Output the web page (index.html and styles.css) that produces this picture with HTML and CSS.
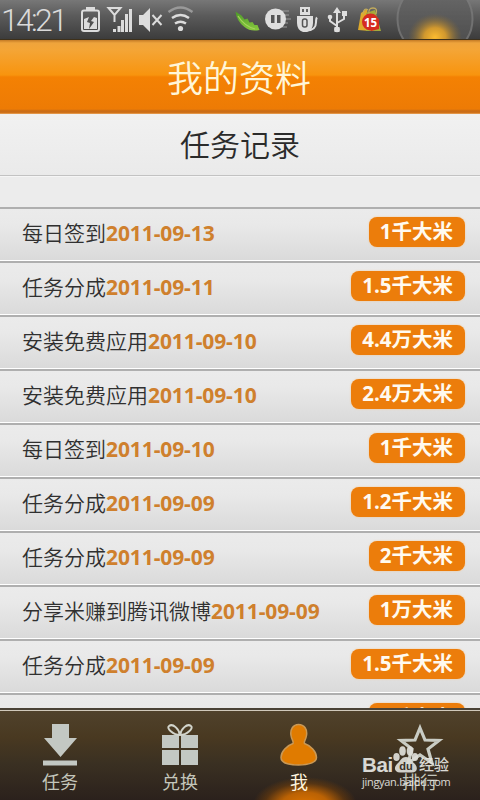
FILE: index.html
```html
<!DOCTYPE html>
<html lang="zh-CN">
<head>
<meta charset="utf-8">
<title>我的资料</title>
<link rel="stylesheet" href="styles.css">
</head>
<body>
<div class="phone">
  <div class="status">
    <span class="clock">14:21</span>
    <svg class="status-icons" width="400" height="39" viewBox="80 0 400 39">
      <defs>
        <radialGradient id="glow" cx="435" cy="37" r="27" gradientUnits="userSpaceOnUse" gradientTransform="translate(0 5) scale(1 .87)">
          <stop offset="0" stop-color="#fbbb30"/><stop offset=".4" stop-color="#dfa02a" stop-opacity=".9"/><stop offset="1" stop-color="#8a6c30" stop-opacity="0"/>
        </radialGradient>
        <linearGradient id="pea" x1="0" y1="0" x2="0" y2="1"><stop offset="0" stop-color="#4c9a28"/><stop offset="1" stop-color="#8ac93f"/></linearGradient>
        <linearGradient id="orb" x1="0" y1="0" x2="0" y2="1"><stop offset="0" stop-color="#666"/><stop offset="1" stop-color="#505050"/></linearGradient>
      </defs>
      <g fill="#dcdcdc">
        <path d="M86 7h9v3h-9z"/>
        <rect x="82" y="10.500" width="17" height="20.500" rx="2" fill="none" stroke="#dcdcdc" stroke-width="2"/>
        <path d="M84 19l5-2-2 5 3 1-1 6 5-7-3-1 3-4 3 1v11H84z"/>
        <path d="M108.500 8h12l-6 7zM114.500 14v8" fill="none" stroke="#dcdcdc" stroke-width="2"/>
        <path d="M113 29h3v3h-3zM117.500 26h3v6h-3zM121 20h3v12h-3zM125 14h3v18h-3zM129 9h3v23h-3z"/>
        <path d="M139 15h4l7-7v24l-7-7h-4z"/>
        <path d="M152.500 15l9 10M161.500 15l-9 10" stroke="#dcdcdc" stroke-width="2"/>
        <circle cx="180.500" cy="28.500" r="2.600"/>
        <path d="M175 23.500q5.500-3.500 11 0M172 18q8.500-6 17 0" fill="none" stroke="#dcdcdc" stroke-width="2.500"/>
        <path d="M168.500 12q12-9 24 0" fill="none" stroke="#999" stroke-width="2.300"/>
      </g>
      <path d="M235.500 11.500l6 4 3 4 3-1 2 4 3-.5 2 3 3 0 2 5q-9 2-15-3-8-6-9-15.500z" fill="url(#pea)"/>
      <path d="M238 16q6 10 17 13" fill="none" stroke="#a5d45c" stroke-width="1.200"/>
      <path d="M281 11h8M283 15h6M284 19h7M283 23h5M281 27h6" stroke="#999" stroke-width="1.200"/>
      <circle cx="275.500" cy="19" r="10.500" fill="#dedede"/>
      <path d="M271 15h3.500v8H271zM277 15h3.500v8H277z" fill="#555"/>
      <g fill="#dedede">
        <path fill-rule="evenodd" d="M300 7h10v8h-10zM302 9v3h2V9zM306 9v3h2V9z"/>
        <path d="M297 16h16v7q0 7-6 9h-4q-6-2-6-9z"/>
        <rect x="302.500" y="19" width="4.500" height="8" rx="2" fill="none" stroke="#555" stroke-width="1.500"/>
        <path d="M306 30.500q10 0 10-8 0-4 1-5" fill="none" stroke="#dedede" stroke-width="2"/>
        <path d="M337 7l4 6h-8zM334.500 27h5v5h-5z"/>
        <path d="M337 12v17M337 26l-7-5v-5M337 23l7-4v-6" fill="none" stroke="#dedede" stroke-width="2"/>
        <circle cx="330" cy="17" r="2.300"/><circle cx="337" cy="29.500" r="2.800"/><path d="M342 11h5v5h-5z"/>
      </g>
      <path d="M361 13l6-4 3 22-12-1z" fill="#dfaa2c"/>
      <path d="M366 13l9-3 6 21h-15z" fill="#a5a93b"/>
      <path d="M363 14q1-7 5-4M369 14q-1-6 4-6t3 6" fill="none" stroke="#c3ac5d" stroke-width="1.300"/>
      <circle cx="370.500" cy="22" r="8.500" fill="#d52c20"/>
      <path d="M371 15l8 4v10l-8 2z" fill="#d52c20"/>
      <text x="370.500" y="26.500" class="count">15</text>
      <circle cx="435" cy="19" r="37.500" fill="url(#orb)" stroke="#7a7a7a" stroke-width="2" opacity=".8"/>
      <ellipse cx="435" cy="37" rx="27" ry="24" fill="url(#glow)"/>
    </svg>
  </div>
  <header class="title">我的资料</header>
  <h2 class="subtitle">任务记录</h2>
  <div class="spacer"></div>
  <main class="list">
    <div class="row"><span>每日签到<b>2011-09-13</b></span><em>1千大米</em></div>
    <div class="row"><span>任务分成<b>2011-09-11</b></span><em>1.5千大米</em></div>
    <div class="row"><span>安装免费应用<b>2011-09-10</b></span><em>4.4万大米</em></div>
    <div class="row"><span>安装免费应用<b>2011-09-10</b></span><em>2.4万大米</em></div>
    <div class="row"><span>每日签到<b>2011-09-10</b></span><em>1千大米</em></div>
    <div class="row"><span>任务分成<b>2011-09-09</b></span><em>1.2千大米</em></div>
    <div class="row"><span>任务分成<b>2011-09-09</b></span><em>2千大米</em></div>
    <div class="row"><span>分享米赚到腾讯微博<b>2011-09-09</b></span><em>1万大米</em></div>
    <div class="row"><span>任务分成<b>2011-09-09</b></span><em>1.5千大米</em></div>
    <div class="row"><span></span><em>1千大米</em></div>
  </main>
  <nav class="tabs">
    <div class="tab">
      <svg width="48" height="48" viewBox="0 0 48 48"><path d="M16 3h17v14h8L24.500 36 8 17h8zM7 39.500h34v5H7z" fill="#c3c8c3"/></svg>
      <span>任务</span>
    </div>
    <div class="tab">
      <svg width="48" height="48" viewBox="0 0 48 48"><path d="M6 14h17v13H6zM25 14h17v13H25zM6 29h17v15H6zM25 29h17v15H25z" fill="#c3c8c3"/><path d="M24 14C17 14 10 7 13 5c4-3 10 3 11 9 1-6 7-12 11-9 3 2-4 9-11 9z" fill="none" stroke="#d2d4cb" stroke-width="2"/></svg>
      <span>兑换</span>
    </div>
    <div class="tab active">
      <svg width="48" height="48" viewBox="0 0 48 48"><path d="M23.500 3.500c6 0 9 5 8 11-.5 4-3 6-2 8 6 2 12 8 12 14 0 5-8 7.500-18 7.500S6 41.500 6 36.500c0-6 6-12 12-14 1-2-1.500-4-2-8-1-6 2-11 7.500-11z" fill="#e07b00" stroke="#c99855" stroke-width="1.500"/></svg>
      <span>我</span>
    </div>
    <div class="tab">
      <svg width="48" height="48" viewBox="0 0 48 48"><path d="M24 7l5 12 14 .5-11 8.500 4 14L24 34l-12 8 4-14L5 19.500l14-.5z" fill="none" stroke="#c9ccc4" stroke-width="3.200"/></svg>
      <span>排行</span>
    </div>
  </nav>
  <div class="mark">
    <div class="brand"><span class="bai">Bai</span><svg width="26" height="28" viewBox="0 0 26 28"><ellipse cx="3.500" cy="11" rx="3.200" ry="4"/><ellipse cx="9.500" cy="5" rx="3.300" ry="4.700"/><ellipse cx="17" cy="5" rx="3.300" ry="4.700"/><ellipse cx="22" cy="11" rx="3.200" ry="4"/><path d="M13 11c5 0 6 5 9 7 4 5 1 9-4 8.500h-10c-6 .5-8-4-4-8.500 3-2 4-7 9-7z"/><text x="13" y="24" class="du">du</text></svg><span class="exp">经验</span></div>
    <div class="url">jingyan.baidu.com</div>
  </div>
</div>
</body>
</html>
```
FILE: styles.css
```css
* { box-sizing: border-box; }
body { margin: 0; font-family: "Open Sans", "Noto Sans CJK SC", sans-serif; }
.phone { position: relative; width: 480px; height: 800px; overflow: hidden; display: flex; flex-direction: column; background: #ebebeb; }

.status { height: 40px; flex: none; display: flex; background: linear-gradient(#777, #5b5b5b 40%, #3c3c3c); border-bottom: 1px solid #3e3019; }
.clock { width: 80px; padding-left: 1px; font: 300 32px/40px Roboto, sans-serif; letter-spacing: -2.7px; color: #dadada; white-space: nowrap; }
.status-icons { flex: none; display: block; }
.count { font: bold 11.5px "Open Sans", sans-serif; fill: #fff; text-anchor: middle; }

.title { height: 74px; flex: none; background: linear-gradient(#c37a25 0, #efa43c 3px, #f4a536 10px, #f8940e 35px, #f48103 37px, #ed7b05 69px, #c76b17 71px, #d2731a 73px, #f0b574 74px); color: #fff6d8; font-size: 36px; line-height: 73px; text-align: center; padding-right: 2px; font-family: "Noto Sans CJK SC", sans-serif; font-weight: 350; }
.subtitle { margin: 0; height: 62px; flex: none; border-bottom: 1px solid #c2c2c2; background: linear-gradient(#f1f1f1, #eaeaea); color: #2b2b2b; font: 350 30px/58px "Noto Sans CJK SC", sans-serif; text-align: center; }
.spacer { height: 31px; flex: none; background: #ececec; border-top: 1px solid #f5f5f5; }

.list { height: 501px; flex: none; overflow: hidden; }
.row { height: 54px; display: flex; justify-content: space-between; align-items: flex-start; padding: 7px 15px 0 22px; border-top: 2px solid #afafaf; border-bottom: 1px solid #fff; background: linear-gradient(#ebebeb, #e9e9e9 30%, #dadada); }
.row span { color: #303030; font-size: 21px; font-weight: 350; line-height: 32px; white-space: nowrap; font-family: "Noto Sans CJK SC", sans-serif; }
.row b { color: #cf802d; font: bold 21px/32px "Open Sans", sans-serif; letter-spacing: -.1px; }
.row em { margin-top: 1px; height: 30px; padding: 0 12px 0 11px; border-radius: 8px; background: #ec7d0b; box-shadow: 0 0 2px #f8c78e; color: #fffaf0; font-style: normal; font-weight: bold; font-size: 20.5px; line-height: 28px; white-space: nowrap; }

.tabs { height: 92px; flex: none; display: grid; grid-template-columns: repeat(4, 1fr); border-top: 2px solid #4a4337; box-shadow: inset 0 1px #d0c9bb; background: linear-gradient(#50422c, #493921 30%, #3a3022 60%, #2b211c); }
.tab { display: flex; flex-direction: column; align-items: center; padding-top: 11px; color: #c3c5ba; font: 400 18px/24px "Noto Sans CJK SC", sans-serif; }
.tab svg { display: block; }
.tab.active { padding-right: 2px; color: #fff5df; background: radial-gradient(ellipse 52px 28px at 65px 95px, #dd7400, #bb6204 45%, rgba(120, 65, 8, .5) 78%, transparent); }

.mark { position: absolute; left: 362px; top: 746px; width: 92px; color: #e6e6e2; opacity: .93; }
.brand { display: flex; height: 28px; align-items: flex-end; }
.brand svg { display: block; flex: none; fill: #deded8; }
.bai { width: 31px; font: bold 20.5px/19px "Liberation Sans", sans-serif; letter-spacing: -.4px; }
.exp { font: 500 15px/21px "Noto Sans CJK SC", sans-serif; white-space: nowrap; }
.du { font: bold 11px "Liberation Sans", sans-serif; fill: #383128; text-anchor: middle; }
.url { font: 11px/15px "Open Sans", sans-serif; white-space: nowrap; letter-spacing: -.3px; }
```
